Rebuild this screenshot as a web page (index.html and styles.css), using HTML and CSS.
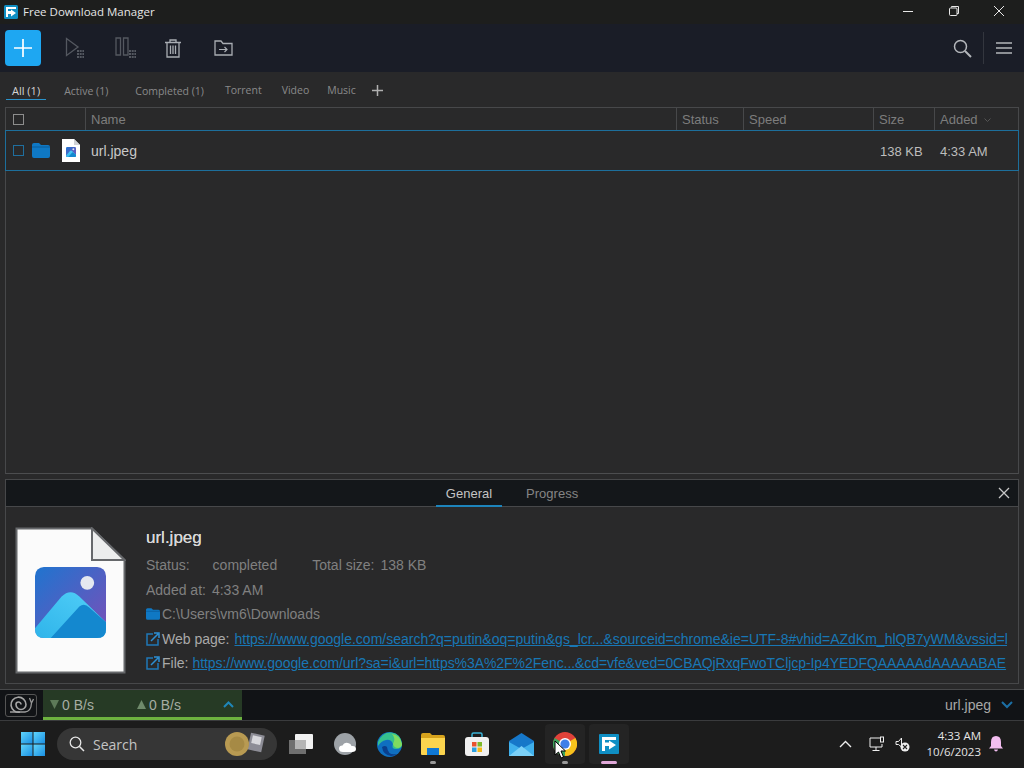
FILE: index.html
```html
<!DOCTYPE html>
<html lang="en">
<head>
    <meta charset="UTF-8">
    <title>Free Download Manager</title>
    <link rel="stylesheet" href="styles.css">
</head>
<body>

<svg class="defs" width="0" height="0">
    <defs>
        <linearGradient id="pic" x1="0" y1="0" x2="1" y2="1">
            <stop offset="0" stop-color="#1f74cf"/>
            <stop offset="1" stop-color="#7b4fb8"/>
        </linearGradient>
        <linearGradient id="peak" x1="0" y1="1" x2="1" y2="0">
            <stop offset="0" stop-color="#2fb4ea"/>
            <stop offset="1" stop-color="#52d0f8"/>
        </linearGradient>
        <linearGradient id="win" x1="0" y1="0" x2="1" y2="1">
            <stop offset="0" stop-color="#5fd4fb"/>
            <stop offset="1" stop-color="#1a8fe3"/>
        </linearGradient>
        <symbol id="picture" viewBox="0 0 72 72">
            <rect width="72" height="72" rx="9" fill="url(#pic)"/>
            <circle cx="53" cy="16" r="7" fill="#e4e8f0"/>
            <path d="M0 62 L27 30 Q36 21 45 30 L72 56 V63 Q72 72 63 72 H9 Q0 72 0 63Z" fill="url(#peak)"/>
            <path d="M16 72 L45 40 Q50 36 55 41 L72 56 V63 Q72 72 63 72Z" fill="#1488cf"/>
        </symbol>
        <symbol id="folder" viewBox="0 0 18 15">
            <path d="M0 2 Q0 0 2 0 H7 L9 2 H16 Q18 2 18 4 V13 Q18 15 16 15 H2 Q0 15 0 13Z" fill="#0f78c4"/>
            <path d="M0 4 H18" stroke="#0a5c9a" stroke-width="1"/>
        </symbol>
        <symbol id="extlink" viewBox="0 0 14 14">
            <path d="M7 2 H1 V13 H12 V7" fill="none" stroke="#1f78b8" stroke-width="1.5"/>
            <path d="M5 9 L12 2 M8 1 H13 V6" fill="none" stroke="#2c8fd4" stroke-width="1.5"/>
        </symbol>
    </defs>
</svg>

<div class="app">
    <header class="titlebar">
        <svg class="app-logo" width="14" height="14" viewBox="0 0 14 14"><rect width="14" height="14" rx="1.5" fill="#0f8fc4"/><path d="M2 2 H12 V4 H4 V6 H7 V4.500 L12 8 L7 11.500 V9 H4 V12 H2Z" fill="#fff"/></svg>
        <span class="app-name">Free Download Manager</span>
        <div class="win-buttons">
            <svg width="12" height="12" viewBox="0 0 12 12"><path d="M1 6.500 H11" stroke="#e8e8e8"/></svg>
            <svg width="12" height="12" viewBox="0 0 12 12"><path d="M3.500 2.500 V1.500 H10.500 V8.500 H9" fill="none" stroke="#e8e8e8"/><rect x="1.500" y="3" width="7.500" height="7.500" rx="1" fill="none" stroke="#e8e8e8"/></svg>
            <svg width="12" height="12" viewBox="0 0 12 12"><path d="M1 1 L11 11 M11 1 L1 11" stroke="#e8e8e8"/></svg>
        </div>
    </header>

    <div class="toolbar">
        <button class="add-btn"><svg width="20" height="20" viewBox="0 0 20 20"><path d="M10 1 V19 M1 10 H19" stroke="#fff" stroke-width="1.700"/></svg></button>
        <div class="tool-icons">
            <svg class="t-play" width="20" height="22" viewBox="0 0 20 22"><path d="M1.500 1.500 L13 10 L1.500 18.500Z" fill="none" stroke="#545860" stroke-width="1.300"/><path d="M12 14 h7 M12 17 h7 M12 20 h7" stroke="#545860" stroke-width="2" stroke-dasharray="2 .7"/></svg>
            <svg class="t-pause" width="22" height="22" viewBox="0 0 22 22"><path d="M1 1 H5.500 V18 H1Z M8.500 1 H13 V18 H8.500Z" fill="none" stroke="#545860" stroke-width="1.300"/><path d="M14 14 h7 M14 17 h7 M14 20 h7" stroke="#545860" stroke-width="2" stroke-dasharray="2 .7"/></svg>
            <svg class="t-trash" width="16" height="19" viewBox="0 0 16 19"><path d="M0 3.500 H16 M5 3 V1 H11 V3 M2 3.500 V18 H14 V3.500 M5.500 6.500 V15 M8 6.500 V15 M10.500 6.500 V15" fill="none" stroke="#a9adb3" stroke-width="1.300"/></svg>
            <svg class="t-move" width="19" height="16" viewBox="0 0 19 16"><path d="M1 14 V1 H7 L9 3.500 H18 V15 H1Z" fill="none" stroke="#a9adb3" stroke-width="1.300"/><path d="M5 9.500 H13 M10.500 7 L13 9.500 L10.500 12" fill="none" stroke="#a9adb3" stroke-width="1.200"/></svg>
        </div>
        <div class="tool-right">
            <svg width="19" height="19" viewBox="0 0 19 19"><circle cx="7.500" cy="7.500" r="6" fill="none" stroke="#b4b7bb" stroke-width="1.500"/><path d="M12 12 L18 18" stroke="#b4b7bb" stroke-width="2"/></svg>
            <span class="tool-sep"></span>
            <svg width="16" height="12" viewBox="0 0 16 12"><path d="M0 1 H16 M0 6 H16 M0 11 H16" stroke="#b4b7bb" stroke-width="1.500"/></svg>
        </div>
    </div>

    <nav class="tabs">
        <span class="tab active">All (1)</span>
        <span class="tab t-active">Active (1)</span>
        <span class="tab t-completed">Completed (1)</span>
        <span class="tab raised t-torrent">Torrent</span>
        <span class="tab raised t-video">Video</span>
        <span class="tab raised t-music">Music</span>
        <svg class="tab-add" width="11" height="11" viewBox="0 0 11 11"><path d="M5.500 0 V11 M0 5.500 H11" stroke="#b0b0b0" stroke-width="1.500"/></svg>
    </nav>

    <section class="table">
        <div class="thead">
            <div class="col c-check"><span class="checkbox"></span></div>
            <div class="col c-name">Name</div>
            <div class="col c-status">Status</div>
            <div class="col c-speed">Speed</div>
            <div class="col c-size">Size</div>
            <div class="col c-added">Added <svg width="7" height="4" viewBox="0 0 7 4"><path d="M.5 .5 L3.500 3.500 L6.500 .5" fill="none" stroke="#555"/></svg></div>
        </div>
        <div class="row">
            <div class="cell c-check">
                <span class="checkbox blue"></span>
                <svg class="row-folder" width="18" height="15"><use href="#folder"/></svg>
                <svg class="row-file" width="18" height="23" viewBox="0 0 18 23"><path d="M0 0 H12 L18 6 V23 H0Z" fill="#fff"/><path d="M12 0 V6 H18Z" fill="#cfd2d6"/><use href="#picture" x="4" y="8" width="10" height="10"/></svg>
            </div>
            <div class="cell c-name">url.jpeg</div>
            <div class="cell c-status"></div>
            <div class="cell c-speed"></div>
            <div class="cell c-size">138 KB</div>
            <div class="cell c-added">4:33 AM</div>
        </div>
    </section>

    <section class="details">
        <div class="details-head">
            <span class="d-tab selected">General</span>
            <span class="d-tab">Progress</span>
            <svg class="d-close" width="12" height="12" viewBox="0 0 12 12"><path d="M1 1 L11 11 M11 1 L1 11" stroke="#c8c8c8" stroke-width="1.300"/></svg>
        </div>
        <div class="details-body">
            <div class="big-file">
                <svg width="111" height="147" viewBox="0 0 111 147">
                    <path d="M1.500 1.500 H77 L109.500 33 V145.500 H1.500Z" fill="#fbfbfb" stroke="#66686b" stroke-width="2"/>
                    <path d="M77 1.500 V33 H109.500Z" fill="#eceded" stroke="#66686b" stroke-width="2"/>
                    <use href="#picture" x="20" y="40" width="71" height="71"/>
                </svg>
            </div>
            <div class="info">
                <h2 class="file-title">url.jpeg</h2>
                <div class="line"><span class="label">Status:</span><span class="value status-value">completed</span><span class="label total">Total size:</span><span class="value">138 KB</span></div>
                <div class="line"><span class="label">Added at:</span><span class="value">4:33 AM</span></div>
                <div class="line path"><svg width="14" height="12"><use href="#folder"/></svg><span>C:\Users\vm6\Downloads</span></div>
                <div class="line link-line"><svg width="14" height="14"><use href="#extlink"/></svg><span class="link-label web-label">Web page:</span><a class="link">https://www.google.com/search?q=putin&amp;oq=putin&amp;gs_lcr...&amp;sourceid=chrome&amp;ie=UTF-8#vhid=AZdKm_hlQB7yWM&amp;vssid=l</a></div>
                <div class="line link-line"><svg width="14" height="14"><use href="#extlink"/></svg><span class="link-label">File:</span><a class="link file-link">https://www.google.com/url?sa=i&amp;url=https%3A%2F%2Fenc...&amp;cd=vfe&amp;ved=0CBAQjRxqFwoTCljcp-Ip4YEDFQAAAAAdAAAAABAE</a></div>
            </div>
        </div>
    </section>

    <footer class="statusbar">
        <div class="snail">
            <svg width="26" height="18" viewBox="0 0 26 18"><path d="M2 16 H17 Q23 15.500 23.500 7 M23.500 7 L21.500 2 M23.500 7 L25.500 3" fill="none" stroke="#9a9a9a" stroke-width="1.300"/><path d="M12 16 A7.500 7.500 0 1 1 18 8.500 A5 5 0 1 1 8 8.500 A2.500 2.500 0 1 1 13 8.500" fill="none" stroke="#a5a5a5" stroke-width="1.600"/></svg>
        </div>
        <div class="speed-box">
            <svg class="arrow" width="9" height="9" viewBox="0 0 9 9"><path d="M0 0 H9 L4.500 9Z" fill="#5d7a58"/></svg>
            <span class="speed down">0 B/s</span>
            <svg class="arrow" width="9" height="9" viewBox="0 0 9 9"><path d="M0 9 H9 L4.500 0Z" fill="#6f8a6b"/></svg>
            <span class="speed">0 B/s</span>
            <svg class="speed-chev" width="11" height="7" viewBox="0 0 11 7"><path d="M1 6 L5.500 1.500 L10 6" fill="none" stroke="#1f86b8" stroke-width="2"/></svg>
        </div>
        <div class="current-file">url.jpeg</div>
        <svg class="file-chev" width="12" height="8" viewBox="0 0 12 8"><path d="M1 1 L6 6 L11 1" fill="none" stroke="#1b6fa5" stroke-width="2"/></svg>
    </footer>
</div>

<div class="taskbar">
    <svg class="win-logo" width="24" height="24" viewBox="0 0 24 24"><rect width="11.500" height="11.500" fill="url(#win)"/><rect x="12.500" width="11.500" height="11.500" fill="url(#win)"/><rect y="12.500" width="11.500" height="11.500" fill="url(#win)"/><rect x="12.500" y="12.500" width="11.500" height="11.500" fill="url(#win)"/></svg>
    <div class="searchbox">
        <svg width="16" height="16" viewBox="0 0 16 16"><circle cx="6.500" cy="6.500" r="5.300" fill="none" stroke="#e6e6e6" stroke-width="1.300"/><path d="M10.500 10.500 L15 15" stroke="#e6e6e6" stroke-width="1.500"/></svg>
        <span class="search-text">Search</span>
        <svg class="search-art" width="42" height="26" viewBox="0 0 42 26"><rect x="24" y="3" width="14" height="17" fill="#8d8d96" transform="rotate(12 31 12)"/><rect x="27" y="5" width="9" height="8" fill="#d8d8dc" transform="rotate(12 31 9)"/><circle cx="12" cy="13" r="12" fill="#b89a52"/><circle cx="12" cy="13" r="7.500" fill="#a68a45"/></svg>
    </div>
    <div class="task-icons">
        <span class="task"><svg width="24" height="20" viewBox="0 0 24 20"><rect y="6" width="17" height="14" fill="#6f6f6f"/><rect x="6" width="18" height="15" rx="1" fill="#f2f2f2"/><rect x="6" y="6" width="11" height="9" fill="#b5b5b5"/></svg></span>
        <span class="task"><svg class="widgets" width="26" height="22" viewBox="0 0 26 22"><circle cx="11" cy="11" r="11" fill="#9da2a7"/><path d="M9 19 Q5 19 5 15.500 Q5 12.500 8.500 12.500 Q10 9 14 10 Q17 10.500 17.500 13 Q22 12.500 22 16 Q22 19 18 19Z" fill="#fff"/></svg></span>
        <span class="task"><svg width="25" height="25" viewBox="0 0 25 25"><circle cx="12.500" cy="12.500" r="12.500" fill="#0f6fc0"/><path d="M1 10 Q5 0 14 0.500 Q24 1.500 25 12 Q25 17 19 17 Q14 17 16 12 Q14 7 9 8 Q4 9 1 14Z" fill="#35c08e"/><path d="M16 12 Q17 16 21 16 Q25 15.500 25 12 Q23 3 15 2 Q19 6 16 12Z" fill="#7fdc60"/><path d="M5 15 Q6 23 14 24 Q18 24 20 22 Q11 24 10 15 Q8 13 5 15Z" fill="#0a3f8c"/></svg></span>
        <span class="task"><svg width="24" height="22" viewBox="0 0 24 22"><path d="M0 2 Q0 0 2 0 H9 L11 2 H22 Q24 2 24 4 V6 H0Z" fill="#d6a21c"/><path d="M0 5 H24 V21 Q24 22 23 22 H1 Q0 22 0 21Z" fill="#fbd44e"/><rect x="6" y="15" width="12" height="7" fill="#0f78d4"/></svg></span>
        <span class="task"><svg width="24" height="24" viewBox="0 0 24 24"><path d="M7 6 V2.500 Q7 1 8.500 1 H15.500 Q17 1 17 2.500 V6" fill="none" stroke="#3ab3d6" stroke-width="1.500"/><rect y="5" width="24" height="19" rx="3" fill="#f0f0f0"/><rect x="7" y="10" width="4.500" height="4.500" fill="#e8522f"/><rect x="12.500" y="10" width="4.500" height="4.500" fill="#7db928"/><rect x="7" y="15.500" width="4.500" height="4.500" fill="#2c9fe0"/><rect x="12.500" y="15.500" width="4.500" height="4.500" fill="#f5b916"/></svg></span>
        <span class="task"><svg width="25" height="23" viewBox="0 0 25 23"><path d="M12.500 0 L25 8 V23 H0 V8Z" fill="#1677c9"/><path d="M0 9 L12.500 16 L25 9 V23 H0Z" fill="#3fb0ec"/><path d="M0 23 L12.500 13 L25 23Z" fill="#7bd0f7"/></svg></span>
        <span class="task lit"><svg width="24" height="24" viewBox="0 0 24 24"><circle cx="12" cy="12" r="12" fill="#e0423a"/><path d="M12 12 L22.400 6 A12 12 0 0 1 12 24Z" fill="#f6c21c"/><path d="M12 12 L12 24 A12 12 0 0 1 1.600 6Z" fill="#3ba55c"/><circle cx="12" cy="12" r="6" fill="#fff"/><circle cx="12" cy="12" r="4.600" fill="#3f7fe8"/></svg></span>
        <span class="task lit"><svg width="20" height="20" viewBox="0 0 20 20"><rect width="20" height="20" rx="1" fill="#0f8fc4"/><path d="M3 3 H17 V6 H6 V8.500 H10 V6.500 L17 11 L10 15.500 V12 H6 V17 H3Z" fill="#fff"/></svg></span>
    </div>
    <div class="tray">
        <svg class="tray-chev" width="13" height="8" viewBox="0 0 13 8"><path d="M1 7 L6.500 1.500 L12 7" fill="none" stroke="#eee" stroke-width="1.400"/></svg>
        <svg class="tray-net" width="16" height="16" viewBox="0 0 16 16"><path d="M11 2 H1 V11 H13 V8 M7 11 V14 M3.500 14.500 H10.500" fill="none" stroke="#eee"/><rect x="11.500" y="1" width="3" height="5" fill="none" stroke="#eee"/></svg>
        <svg class="tray-sound" width="15" height="15" viewBox="0 0 15 15"><path d="M1 4.500 H3.500 L6.500 1 V10 L3.500 7.500 H1Z" fill="none" stroke="#eee"/><circle cx="10" cy="10" r="4.500" fill="#eee"/><path d="M8 8 L12 12 M12 8 L8 12" stroke="#222" stroke-width="1.100"/></svg>
        <div class="clock"><div>4:33 AM</div><div>10/6/2023</div></div>
        <svg class="tray-bell" width="14" height="16" viewBox="0 0 14 16"><path d="M7 0 Q12 0 12 6 V10 L14 12.500 H0 L2 10 V6 Q2 0 7 0Z M5 13.500 H9 Q8.500 15.500 7 15.500 Q5.500 15.500 5 13.500Z" fill="#f3bdf0"/></svg>
    </div>
</div>

<svg class="cursor" width="12" height="19" viewBox="0 0 12 19"><path d="M1 1 V15 L4.500 12 L7 18 L9.500 17 L7 11 H11.500Z" fill="#fff" stroke="#000"/></svg>

</body>
</html>
```

FILE: styles.css
```css
* {
    box-sizing: border-box;
}
body {
    margin: 0;
    width: 1024px;
    height: 768px;
    overflow: hidden;
    position: relative;
    background-color: #1c1c1c;
    font-family: "Liberation Sans", Arial, sans-serif;
    color: #a8a8a8;
}
.defs {
    position: absolute;
}
.app {
    height: 721px;
    display: flex;
    flex-direction: column;
    background-color: #29292a;
}

/* title bar */
.titlebar {
    height: 24px;
    flex: none;
    display: flex;
    align-items: center;
    padding-left: 4px;
    background-color: #1d1e1d;
}
.app-name {
    margin-left: 5px;
    padding-bottom: 2px;
    font-family: "Open Sans", sans-serif;
    font-size: 11.500px;
    color: #e6e6e6;
}
.win-buttons {
    margin-left: auto;
    display: flex;
    gap: 33.500px;
    padding: 0 19px 3px 0;
}

/* toolbar */
.toolbar {
    height: 48px;
    flex: none;
    display: flex;
    align-items: center;
    padding-left: 5px;
    background-color: #1a1d27;
}
.add-btn {
    width: 36px;
    height: 36px;
    padding: 0;
    border: none;
    border-radius: 4px;
    background-color: #1ea7f2;
    display: flex;
    align-items: center;
    justify-content: center;
}
.tool-icons {
    display: flex;
    align-items: center;
    margin-left: 24px;
}
.t-pause {
    margin-left: 30px;
}
.t-trash {
    margin-left: 28px;
}
.t-move {
    margin-left: 33px;
}
.tool-right {
    margin-left: auto;
    display: flex;
    align-items: center;
    padding-right: 12px;
}
.tool-sep {
    width: 1px;
    height: 32px;
    margin: 0 12px 0 11px;
    background-color: #33363e;
}

/* tabs */
.tabs {
    height: 35px;
    flex: none;
    display: flex;
    align-items: center;
    padding-left: 6px;
    font-family: "Open Sans", sans-serif;
    font-size: 10.500px;
    color: #8a8a8a;
}
.tab {
    padding: 2px 6px 0;
    line-height: 16px;
    border-bottom: 1px solid transparent;
    margin-top: 1px;
}
.tab.active {
    font-size: 11px;
    color: #d4d4d4;
    border-bottom-color: #2a93cc;
    margin-right: 12px;
}
.t-active {
    margin-right: 15px;
}
.t-completed {
    margin-right: 9px;
}
.raised {
    margin-top: 0;
}
.t-torrent {
    margin-right: 8px;
}
.t-video {
    margin-right: 6px;
}
.tab-add {
    margin: 2px 0 0 10px;
}

/* download table */
.table {
    height: 367px;
    flex: none;
    margin: 0 5px;
    border: 1px solid #47484a;
    border-bottom-color: #4c4d4f;
}
.thead, .row {
    display: flex;
}
.thead {
    height: 22px;
    font-size: 13px;
    line-height: 23px;
    color: #7d7d7d;
}
.col {
    padding-left: 5px;
    border-left: 1px solid #47484a;
}
.col.c-check {
    border-left: none;
    display: flex;
    align-items: center;
    padding-left: 7px;
}
.c-check {
    width: 79px;
}
.c-name {
    width: 591px;
}
.c-status {
    width: 67px;
}
.c-speed {
    width: 130px;
}
.c-size {
    width: 61px;
}
.c-added {
    flex: 1;
}
.c-added svg {
    margin: 0 0 2px 3px;
}
.row {
    height: 41px;
    margin-left: -1px;
    margin-right: -1px;
    align-items: center;
    border: 1px solid #1d6f9c;
    font-size: 13px;
    color: #bdbdbd;
}
.cell {
    padding-left: 6px;
}
.cell.c-check {
    padding-left: 7px;
    width: 79px;
    display: flex;
    align-items: center;
}
.cell.c-name {
    font-size: 14px;
    color: #c8c8c8;
}
.cell.c-size, .cell.c-added {
    padding-top: 1px;
}
.cell.c-size {
    padding-left: 7px;
}
.checkbox {
    width: 11px;
    height: 11px;
    flex: none;
    border: 1px solid #8d8d8d;
}
.checkbox.blue {
    border-color: #1f6f9f;
}
.row-folder {
    margin-left: 8px;
}
.row-file {
    margin-left: 12px;
}

/* details panel */
.details {
    height: 205px;
    flex: none;
    margin: 5px 5px 0;
    border: 1px solid #47484a;
}
.details-head {
    height: 27px;
    display: flex;
    justify-content: center;
    position: relative;
    background-color: #14171a;
    border-bottom: 1px solid #47484a;
    font-size: 13px;
    line-height: 27px;
}
.d-tab {
    padding: 0 10px;
    margin-right: 5px;
    color: #858585;
}
.d-tab.selected {
    color: #c4c4c4;
    border-bottom: 2px solid #1d84bb;
    height: 27px;
}
.d-tab + .d-tab {
    margin-left: 9px;
    margin-right: 0;
}
.d-close {
    position: absolute;
    right: 8px;
    top: 7px;
}
.details-body {
    display: flex;
    padding: 20px 0 0 9px;
}
.big-file {
    width: 131px;
    flex: none;
}
.big-file svg {
    display: block;
}
.info {
    flex: 1;
    min-width: 0;
    padding-right: 11px;
}
.file-title {
    margin: 0;
    font-size: 17px;
    font-weight: normal;
    line-height: 22px;
    color: #d8d8d8;
    text-shadow: 0 0 .5px #d8d8d8;
}
.line {
    display: flex;
    align-items: center;
    height: 24.500px;
    font-size: 14px;
    color: #808080;
    white-space: nowrap;
}
.line:nth-child(2) {
    margin-top: 4px;
}
.value {
    margin-left: 6px;
}
.status-value {
    margin-left: 23px;
}
.total {
    margin-left: 35px;
}
.line svg {
    flex: none;
    margin-right: 2px;
}
.link-label {
    color: #a9a9a9;
    margin-right: 4px;
}
.web-label {
    margin-right: 5px;
}
.link {
    flex: 1;
    min-width: 0;
    overflow: hidden;
    color: #1877b5;
    text-decoration: underline;
}
.file-link {
    letter-spacing: -.06px;
}

/* status bar */
.statusbar {
    height: 32px;
    flex: none;
    margin-top: 5px;
    display: flex;
    align-items: center;
    background-color: #111316;
    border-top: 1px solid #47484a;
    border-bottom: 1px solid #3a3b3d;
    font-size: 14px;
}
.snail {
    width: 32px;
    height: 23px;
    margin-left: 5px;
    display: flex;
    align-items: center;
    justify-content: center;
    border: 1px solid #555;
    border-radius: 3px;
}
.speed-box {
    width: 199px;
    height: 30px;
    margin-left: 6px;
    padding: 2px 0 0 7px;
    display: flex;
    align-items: center;
    background-color: #263a25;
    border-bottom: 3px solid #6db33f;
    color: #a5ada3;
}
.speed {
    margin-left: 3px;
}
.down {
    width: 75px;
}
.speed-chev {
    margin-left: auto;
    margin-right: 8px;
}
.current-file {
    margin-left: auto;
    color: #a8a8a8;
}
.file-chev {
    margin: 0 11px 0 10px;
}

/* windows taskbar */
.taskbar {
    height: 47px;
    padding-bottom: 1px;
    display: flex;
    align-items: center;
    background-color: #1c1c1c;
    position: relative;
}
.win-logo {
    margin-left: 21px;
}
.searchbox {
    width: 220px;
    height: 32px;
    margin-left: 12px;
    padding-left: 12px;
    display: flex;
    align-items: center;
    border-radius: 16px;
    background-color: #363636;
    font-family: "Open Sans", sans-serif;
    font-size: 14px;
    color: #c4c4c4;
}
.search-text {
    margin-left: 8px;
}
.search-art {
    margin-left: auto;
    margin-right: 10px;
}
.task-icons {
    display: flex;
    margin-left: 4px;
}
.task {
    width: 40px;
    height: 40px;
    margin-right: 4px;
    display: flex;
    align-items: center;
    justify-content: center;
    border-radius: 4px;
    position: relative;
}
.task.lit {
    background-color: #242424;
}
.widgets {
    margin-left: 4px;
}
.task:nth-child(4)::after, .task:nth-child(7)::after, .task:nth-child(8)::after {
    content: "";
    position: absolute;
    bottom: 0;
    left: 17px;
    width: 6px;
    height: 3px;
    border-radius: 2px;
    background-color: #9a9a9a;
}
.task:nth-child(8)::after {
    left: 12px;
    width: 16px;
    background-color: #e0a8d8;
}
.tray {
    margin-left: auto;
    display: flex;
    align-items: center;
    padding-right: 21px;
}
.tray-net {
    margin-left: 17px;
}
.tray-sound {
    margin-left: 10px;
}
.clock {
    margin-left: 17px;
    text-align: right;
    font-family: "Open Sans", sans-serif;
    font-size: 11.500px;
    line-height: 16px;
    color: #e4e4e4;
}
.tray-bell {
    margin-left: 8px;
}

.cursor {
    position: absolute;
    left: 554px;
    top: 740px;
}
```
